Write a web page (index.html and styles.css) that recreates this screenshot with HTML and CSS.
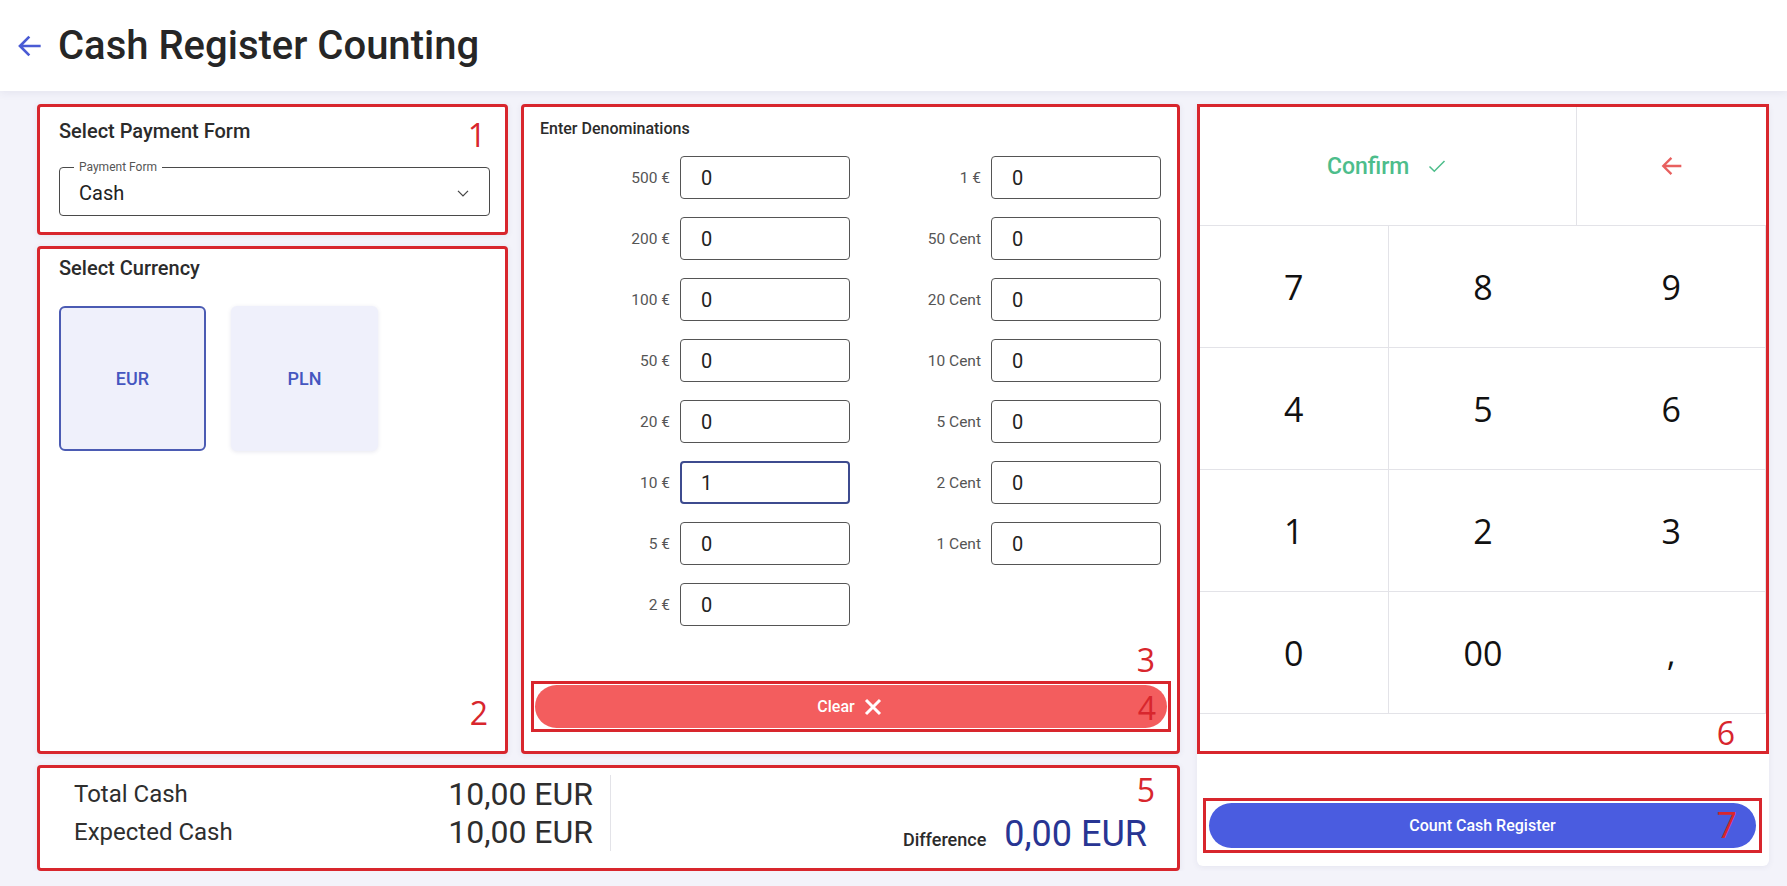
FILE: index.html
```html
<!DOCTYPE html>
<html lang="en">
  <head>
    <meta charset="UTF-8" />
    <meta name="viewport" content="width=device-width, initial-scale=1" />
    <title>Cash Register Counting</title>
    <link rel="stylesheet" href="styles.css">
  </head>
  <body>
    <header class="topbar">
      <button class="back-btn" title="Back">
        <svg viewBox="0 0 24 24" width="32" height="32"><path d="M20 12H4.5M11.5 5l-7 7 7 7" /></svg>
      </button>
      <h1>Cash Register Counting</h1>
    </header>

    <main class="layout">
      <div class="left-area">
        <div class="top-row">
          <div class="side-col">
            <section class="card mark payment-card">
              <h2 class="card-title">Select Payment Form</h2>
              <div class="select-field">
                <span class="select-legend">Payment Form</span>
                <span class="select-value">Cash</span>
                <svg class="chevron" viewBox="0 0 24 24" width="20" height="20"><path d="M6 9.5l6 6 6-6" /></svg>
              </div>
              <span class="mark-num num-1">1</span>
            </section>

            <section class="card mark currency-card">
              <h2 class="card-title">Select Currency</h2>
              <div class="currency-list">
                <button class="currency-tile active">EUR</button>
                <button class="currency-tile">PLN</button>
              </div>
              <span class="mark-num num-2">2</span>
            </section>
          </div>

          <section class="card mark denom-card">
            <h3 class="denom-title">Enter Denominations</h3>
            <div class="denom-grid">
              <label class="denom-label">500 €</label><input class="denom-input" value="0" />
              <label class="denom-label">1 €</label><input class="denom-input" value="0" />
              <label class="denom-label">200 €</label><input class="denom-input" value="0" />
              <label class="denom-label">50 Cent</label><input class="denom-input" value="0" />
              <label class="denom-label">100 €</label><input class="denom-input" value="0" />
              <label class="denom-label">20 Cent</label><input class="denom-input" value="0" />
              <label class="denom-label">50 €</label><input class="denom-input" value="0" />
              <label class="denom-label">10 Cent</label><input class="denom-input" value="0" />
              <label class="denom-label">20 €</label><input class="denom-input" value="0" />
              <label class="denom-label">5 Cent</label><input class="denom-input" value="0" />
              <label class="denom-label">10 €</label><input class="denom-input focused" value="1" />
              <label class="denom-label">2 Cent</label><input class="denom-input" value="0" />
              <label class="denom-label">5 €</label><input class="denom-input" value="0" />
              <label class="denom-label">1 Cent</label><input class="denom-input" value="0" />
              <label class="denom-label">2 €</label><input class="denom-input" value="0" />
            </div>
            <span class="mark-num num-3">3</span>
            <div class="mark clear-wrap">
              <button class="clear-btn">
                Clear
                <svg viewBox="0 0 24 24" width="24" height="24"><path d="M5 5l14 14M19 5L5 19" /></svg>
              </button>
              <span class="mark-num num-4">4</span>
            </div>
          </section>
        </div>

        <section class="card mark summary-card">
          <div class="totals">
            <div class="total-row"><span class="total-label">Total Cash</span><span class="total-value">10,00 EUR</span></div>
            <div class="total-row"><span class="total-label">Expected Cash</span><span class="total-value">10,00 EUR</span></div>
          </div>
          <div class="difference">
            <span class="diff-label">Difference</span>
            <span class="diff-value">0,00 EUR</span>
          </div>
          <span class="mark-num num-5">5</span>
        </section>
      </div>

      <aside class="card keypad-card">
        <div class="mark keypad">
          <button class="key confirm-key">
            Confirm
            <svg viewBox="0 0 24 24" width="24" height="24"><path d="M4.5 12.5l4.8 4.8L19.5 7" /></svg>
          </button>
          <button class="key back-key">
            <svg viewBox="0 0 24 24" width="28" height="28"><path d="M20 12H4.5M11.5 5l-7 7 7 7" /></svg>
          </button>
          <button class="key">7</button>
          <button class="key">8</button>
          <button class="key">9</button>
          <button class="key">4</button>
          <button class="key">5</button>
          <button class="key">6</button>
          <button class="key">1</button>
          <button class="key">2</button>
          <button class="key">3</button>
          <button class="key">0</button>
          <button class="key">00</button>
          <button class="key">,</button>
          <span class="mark-num num-6">6</span>
        </div>
        <div class="mark count-wrap">
          <button class="count-btn">Count Cash Register</button>
          <span class="mark-num num-7">7</span>
        </div>
      </aside>
    </main>
  </body>
</html>
```

FILE: styles.css
```css
:root {
  --bg: #f3f3fa;
  --card: #fff;
  --mark: #d8262d;
  --primary: #4a5ce0;
  --indigo: #4556c0;
  --navy: #283593;
  --danger: #f35d5e;
  --success: #4dbd8b;
  --text: #2a2a2a;
  --muted: #555;
  --line: #e3e3e8;
}
* {
  box-sizing: border-box;
}
body {
  margin: 0;
  background: var(--bg);
  font-family: Roboto, "Liberation Sans", sans-serif;
  color: var(--text);
}
button {
  font-family: inherit;
  border: none;
  background: none;
  cursor: pointer;
  padding: 0;
}
.topbar {
  height: 91px;
  background: var(--card);
  display: flex;
  align-items: center;
  padding-left: 13px;
  box-shadow: 0 2px 8px rgba(60, 60, 120, 0.08);
}
.back-btn {
  display: flex;
  width: 34px;
  height: 34px;
  align-items: center;
  justify-content: center;
  margin-right: 11px;
}
.back-btn svg path {
  fill: none;
  stroke: #4a5bd4;
  stroke-width: 2;
}
.topbar h1 {
  margin: 0;
  font-size: 40px;
  font-weight: 500;
  color: #262626;
}
.layout {
  display: flex;
  align-items: flex-start;
  gap: 17px;
  padding: 13px 18px 0 37px;
}
.left-area {
  width: 1143px;
  display: flex;
  flex-direction: column;
  gap: 11px;
}
.top-row {
  display: flex;
  gap: 13px;
  height: 650px;
}
.side-col {
  width: 471px;
  display: flex;
  flex-direction: column;
  gap: 11px;
}
.card {
  background: var(--card);
  border-radius: 4px;
  box-shadow: 0 1px 6px rgba(60, 60, 120, 0.08);
  position: relative;
}
.mark {
  border: 3px solid var(--mark);
}
.mark-num {
  position: absolute;
  font-family: "Open Sans", "Noto Sans", sans-serif;
  font-size: 32px;
  line-height: 1;
  color: var(--mark);
}
.card-title {
  margin: 0;
  font-size: 20px;
  line-height: 24px;
  font-weight: 500;
  color: #2b2b2b;
}

/* payment form */
.payment-card {
  height: 131px;
  padding: 12px 15px 0 19px;
}
.select-field {
  position: relative;
  margin-top: 24px;
  height: 49px;
  border: 1px solid #4a4a4a;
  border-radius: 4px;
  display: flex;
  align-items: center;
  padding: 2px 16px 0 19px;
}
.select-legend {
  position: absolute;
  top: -8px;
  left: 14px;
  padding: 0 5px;
  background: var(--card);
  font-size: 12px;
  line-height: 14px;
  color: #555;
}
.select-value {
  flex: 1;
  font-size: 20px;
  color: #222;
}
.chevron path {
  fill: none;
  stroke: #444;
  stroke-width: 1.5;
}
.num-1 {
  top: 12px;
  right: 19px;
}

/* currency */
.currency-card {
  flex: 1;
  padding: 7px 15px 0 19px;
}
.currency-list {
  display: flex;
  gap: 25px;
  margin-top: 26px;
}
.currency-tile {
  width: 147px;
  height: 145px;
  background: #eff0fb;
  border-radius: 6px;
  font-size: 18px;
  font-weight: 500;
  color: var(--indigo);
  box-shadow: 0 1px 4px rgba(60, 60, 120, 0.12);
}
.currency-tile.active {
  border: 2px solid #4b5bb3;
  box-shadow: none;
}
.num-2 {
  bottom: 22px;
  right: 17px;
}

/* denominations */
.denom-card {
  flex: 1;
  display: flex;
  flex-direction: column;
  padding: 12px 6px 19px 7px;
}
.denom-title {
  margin: 0 0 17px 9px;
  font-size: 16px;
  line-height: 20px;
  font-weight: 500;
  color: #2b2b2b;
}
.denom-grid {
  display: grid;
  grid-template-columns: 130px 170px 1fr 170px;
  column-gap: 10px;
  row-gap: 18px;
  align-items: center;
  padding: 0 10px 0 9px;
}
.denom-label {
  text-align: right;
  font-size: 15.5px;
  color: var(--muted);
}
.denom-input {
  height: 43px;
  width: 170px;
  border: 1px solid #555;
  border-radius: 4px;
  padding: 0 0 0 20px;
  font-family: inherit;
  font-size: 20px;
  color: #222;
  outline: none;
}
.denom-input.focused {
  border: 2px solid #3d4b8f;
  padding-left: 19px;
}
.num-3 {
  bottom: 75px;
  right: 22px;
}
.clear-wrap {
  position: relative;
  margin-top: auto;
  padding: 1px;
}
.clear-btn {
  width: 100%;
  height: 43px;
  border-radius: 22px;
  background: var(--danger);
  color: #fff;
  font-size: 16px;
  font-weight: 500;
  display: flex;
  align-items: center;
  justify-content: center;
  gap: 6px;
}
.clear-btn svg path {
  fill: none;
  stroke: #fff;
  stroke-width: 3;
}
.num-4 {
  bottom: 5px;
  right: 12px;
}

/* summary */
.summary-card {
  height: 106px;
  display: flex;
  align-items: flex-start;
  padding: 7px 30px 0 34px;
}
.totals {
  width: 537px;
  padding-right: 17px;
  border-right: 1px solid var(--line);
}
.total-row {
  display: flex;
  justify-content: space-between;
  align-items: center;
  height: 38px;
}
.total-label {
  font-size: 24px;
  color: #2e2e2e;
}
.total-value {
  font-size: 32px;
  color: #2e2e2e;
}
.difference {
  flex: 1;
  display: flex;
  justify-content: flex-end;
  align-items: baseline;
  gap: 18px;
  align-self: flex-end;
  padding-bottom: 13px;
}
.diff-label {
  font-size: 18px;
  font-weight: 500;
  color: #2b2b2b;
}
.diff-value {
  font-size: 36px;
  color: var(--navy);
}
.num-5 {
  top: 6px;
  right: 22px;
}

/* keypad */
.keypad-card {
  width: 572px;
  height: 762px;
  border-radius: 6px;
}
.keypad {
  position: relative;
  height: 650px;
  display: grid;
  grid-template-columns: repeat(3, 1fr);
  grid-template-rows: 119px repeat(4, 122px);
  align-content: start;
}
.key {
  border-bottom: 1px solid var(--line);
  border-right: 1px solid var(--line);
  font-family: "Open Sans", "Noto Sans", sans-serif;
  font-size: 34px;
  color: #111;
  display: flex;
  align-items: center;
  justify-content: center;
}
.key:nth-child(3n + 1) {
  border-right: none;
}
.confirm-key {
  grid-column: span 2;
  border-right: 1px solid var(--line) !important;
  font-family: Roboto, sans-serif;
  font-size: 23px;
  font-weight: 500;
  color: var(--success);
  gap: 16px;
}
.confirm-key svg path {
  fill: none;
  stroke: var(--success);
  stroke-width: 1.5;
}
.back-key {
  border-right: none;
}
.back-key svg path {
  fill: none;
  stroke: #e8605f;
  stroke-width: 2;
}
.num-6 {
  bottom: 2px;
  right: 31px;
}
.count-wrap {
  position: relative;
  margin: 44px 7px 0 6px;
  padding: 2px 3px;
}
.count-btn {
  width: 100%;
  height: 45px;
  border-radius: 23px;
  background: var(--primary);
  color: #fff;
  font-size: 16px;
  font-weight: 500;
}
.num-7 {
  top: 6px;
  right: 22px;
  font-size: 36px;
}
```
